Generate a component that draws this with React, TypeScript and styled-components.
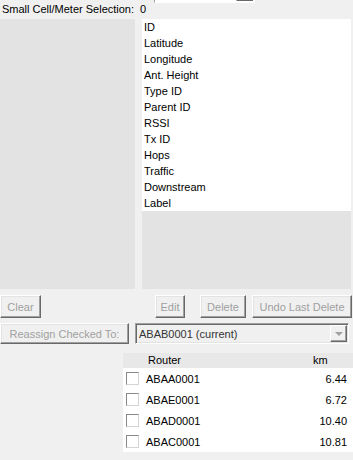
import React from 'react'
import styled, { createGlobalStyle } from 'styled-components'

const fields = [
  'ID', 'Latitude', 'Longitude', 'Ant. Height', 'Type ID', 'Parent ID',
  'RSSI', 'Tx ID', 'Hops', 'Traffic', 'Downstream', 'Label',
]

const routers = [
  { id: 'ABAA0001', km: '6.44' },
  { id: 'ABAE0001', km: '6.72' },
  { id: 'ABAD0001', km: '10.40' },
  { id: 'ABAC0001', km: '10.81' },
]

export default function App() {
  return (
    <>
      <GlobalStyle />
      <Form>
        <TopStrip>
          <TopCombo>
            <DropButton />
          </TopCombo>
        </TopStrip>

        <SelectionRow>
          <span>Small Cell/Meter Selection:</span>
          <Count>0</Count>
        </SelectionRow>

        <Panels>
          <LeftPanel />
          <RightPanel>
            <FieldList>
              {fields.map(f => (
                <FieldItem key={f}>{f}</FieldItem>
              ))}
            </FieldList>
          </RightPanel>
        </Panels>

        <ButtonRow>
          <Button w={41}>Clear</Button>
          <Spacer />
          <Button w={30}>Edit</Button>
          <Button w={46} gap={15}>Delete</Button>
          <Button w={100} gap={6}>Undo Last Delete</Button>
        </ButtonRow>

        <ReassignRow>
          <Button w={129}>Reassign Checked To:</Button>
          <Combo>
            <ComboText>ABAB0001 (current)</ComboText>
            <DropButton />
          </Combo>
        </ReassignRow>

        <RouterList>
          <ListHeader>
            <HeaderName>Router</HeaderName>
            <HeaderKm>km</HeaderKm>
          </ListHeader>
          {routers.map(r => (
            <ListRow key={r.id}>
              <CheckBox />
              <RowName>{r.id}</RowName>
              <RowKm>{r.km}</RowKm>
            </ListRow>
          ))}
        </RouterList>
      </Form>
    </>
  )
}

const GlobalStyle = createGlobalStyle`
  html, body {
    margin: 0;
    padding: 0;
    background: #f0f0f0;
    overflow: hidden;
  }
  body {
    font-family: "Liberation Sans", Arial, sans-serif;
    font-size: 11px;
    color: #000;
  }
`

const Form = styled.div`
  display: flex;
  flex-direction: column;
  width: 353px;
  height: 460px;
  background: #f0f0f0;
`

const TopStrip = styled.div`
  display: flex;
  align-items: flex-end;
  height: 3px;
  padding-left: 154px;
  overflow: hidden;
`

const TopCombo = styled.div`
  display: flex;
  justify-content: flex-end;
  align-items: flex-end;
  box-sizing: border-box;
  width: 101px;
  height: 21px;
  flex-shrink: 0;
  border: 1px solid #7a7a7a;
  border-color: #a0a0a0 #ffffff #ffffff #a0a0a0;
  background: #fff;
  padding: 1px;
`

const SelectionRow = styled.div`
  display: flex;
  height: 16px;
  line-height: 12px;
  padding-left: 2px;
`

const Count = styled.span`
  margin-left: 6px;
`

const Panels = styled.div`
  display: flex;
  gap: 7px;
  height: 270px;
`

const LeftPanel = styled.div`
  width: 135px;
  background: #e3e3e3;
`

const RightPanel = styled.div`
  width: 209px;
  background: #e3e3e3;
`

const FieldList = styled.div`
  background: #fff;
`

const FieldItem = styled.div`
  height: 16px;
  line-height: 16px;
  padding-left: 2px;
  padding-top: 0px;
`

const ButtonRow = styled.div`
  display: flex;
  margin-top: 6px;
  height: 23px;
`

const Spacer = styled.div`
  flex: 0 0 114px;
`

const Button = styled.div<{ w: number; gap?: number }>`
  box-sizing: border-box;
  width: ${p => p.w}px;
  margin-left: ${p => p.gap ?? 0}px;
  height: 100%;
  display: flex;
  align-items: center;
  justify-content: center;
  white-space: nowrap;
  color: #a0a0a0;
  background: #f0f0f0;
  border: 1px solid;
  border-color: #ffffff #696969 #696969 #ffffff;
  box-shadow: inset -1px -1px 0 #a0a0a0, inset 1px 1px 0 #e3e3e3;
`

const ReassignRow = styled.div`
  display: flex;
  gap: 6px;
  margin-top: 5px;
  height: 21px;

  > :first-child {
    height: 21px;
  }
`

const Combo = styled.div`
  box-sizing: border-box;
  width: 214px;
  height: 21px;
  display: flex;
  align-items: center;
  border: 1px solid;
  border-color: #a0a0a0 #ffffff #ffffff #a0a0a0;
  box-shadow: inset 1px 1px 0 #696969, inset -1px -1px 0 #e3e3e3;
  padding: 2px 1px 2px 3px;
`

const ComboText = styled.div`
  flex: 1;
  color: #333;
`

const DropButton = styled.div`
  box-sizing: border-box;
  position: relative;
  width: 17px;
  height: 17px;
  flex-shrink: 0;
  background: #f0f0f0;
  border: 1px solid;
  border-color: #ffffff #696969 #696969 #ffffff;
  box-shadow: inset -1px -1px 0 #a0a0a0;

  &::after {
    content: '';
    position: absolute;
    left: 4px;
    top: 6px;
    border-left: 4px solid transparent;
    border-right: 4px solid transparent;
    border-top: 4px solid #a0a0a0;
  }
`

const RouterList = styled.div`
  margin-top: 9px;
  margin-left: 123px;
  width: 230px;
`

const ListHeader = styled.div`
  display: flex;
  height: 15px;
  line-height: 15px;
  background: #e8e8e8;
`

const HeaderName = styled.div`
  flex: 1;
  padding-left: 25px;
`

const HeaderKm = styled.div`
  width: 40px;
`

const ListRow = styled.div`
  display: flex;
  align-items: center;
  height: 21px;
  background: #fff;
`

const CheckBox = styled.div`
  box-sizing: border-box;
  width: 13px;
  height: 13px;
  margin-left: 3px;
  background: #fff;
  border: 1px solid;
  border-color: #8a8a8a #d4d4d4 #d4d4d4 #8a8a8a;
`

const RowName = styled.div`
  flex: 1;
  padding-left: 7px;
`

const RowKm = styled.div`
  width: 40px;
  text-align: right;
  padding-right: 6px;
`
